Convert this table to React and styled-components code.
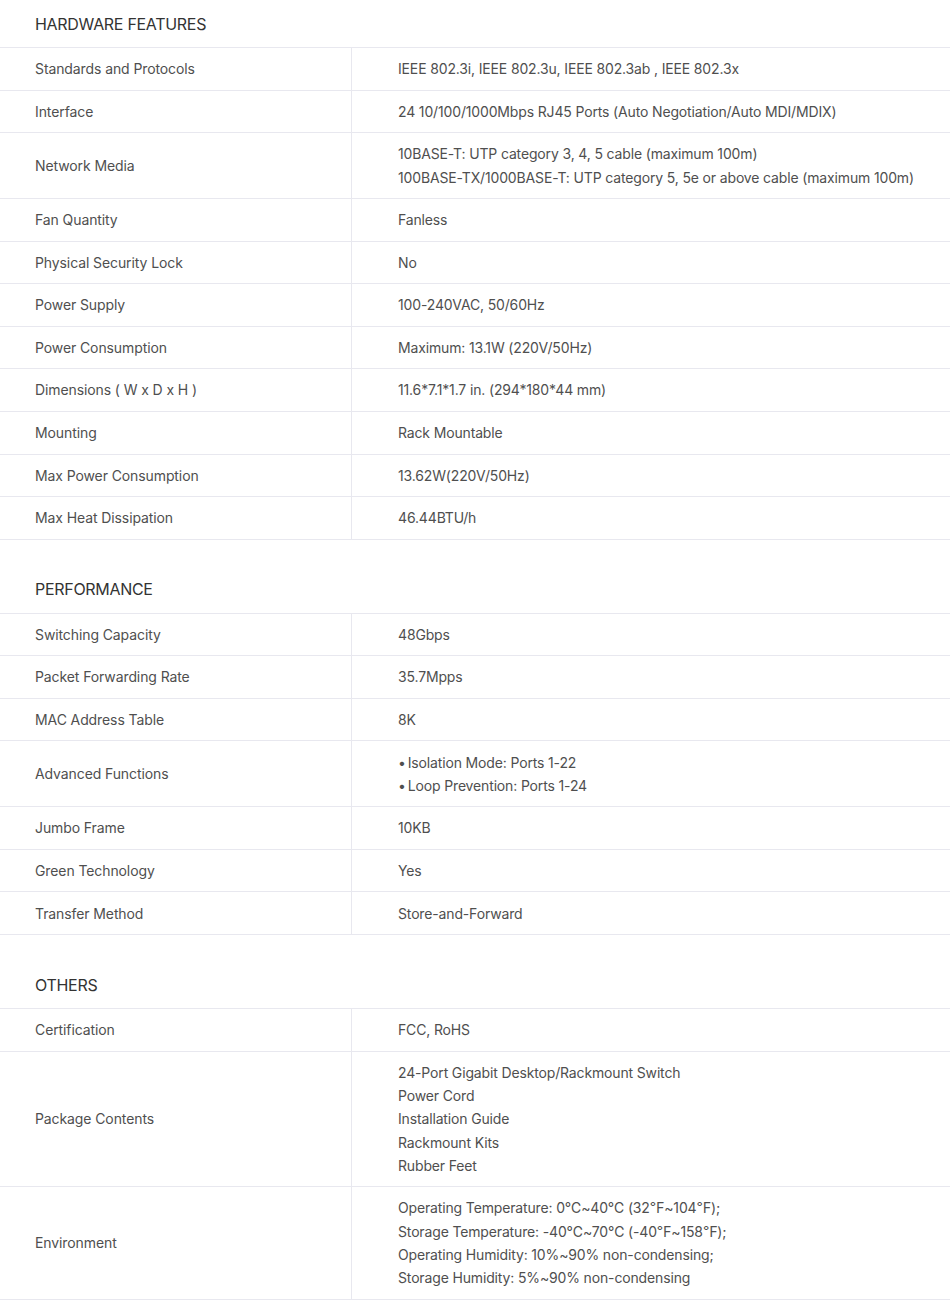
import React from "react";
import styled, { createGlobalStyle } from "styled-components";

const GlobalStyle = createGlobalStyle`
  html, body {
    margin: 0;
    padding: 0;
    background: #fff;
  }
  body {
    font-family: Inter, "Noto Sans", Arial, sans-serif;
    -webkit-font-smoothing: antialiased;
  }
`;

const Page = styled.div`
  width: 950px;
  background: #fff;
`;

const Section = styled.section`
  & + & {
    margin-top: 26px;
  }
`;

const SectionTitle = styled.h2`
  margin: 0;
  height: 47px;
  padding-left: 35px;
  display: flex;
  align-items: center;
  font-size: 16px;
  font-weight: 400;
  color: #333;
  letter-spacing: -0.3px;
`;

const Table = styled.div`
  border-top: 1px solid #e8e8ef;
`;

const Row = styled.div`
  display: grid;
  grid-template-columns: 352px 1fr;
  border-bottom: 1px solid #e8e8ef;
`;

const Label = styled.div`
  display: flex;
  align-items: center;
  padding: 9.15px 0 9.15px 35px;
  border-right: 1px solid #e8e8ef;
  font-size: 14px;
  line-height: 23.3px;
  letter-spacing: -0.1px;
  color: #4f4f4f;
`;

const Value = styled.div`
  padding: 9.15px 20px 9.15px 46px;
  font-size: 14px;
  line-height: 23.3px;
  letter-spacing: -0.15px;
  color: #4f4f4f;
`;

const Line = styled.div`
  white-space: nowrap;
`;

const Bullet = styled.span`
  margin-right: 2px;
`;

const sections = [
  {
    title: "HARDWARE FEATURES",
    rows: [
      ["Standards and Protocols", ["IEEE 802.3i, IEEE 802.3u, IEEE 802.3ab , IEEE 802.3x"]],
      ["Interface", ["24 10/100/1000Mbps RJ45 Ports (Auto Negotiation/Auto MDI/MDIX)"]],
      [
        "Network Media",
        [
          "10BASE-T: UTP category 3, 4, 5 cable (maximum 100m)",
          "100BASE-TX/1000BASE-T: UTP category 5, 5e or above cable (maximum 100m)",
        ],
      ],
      ["Fan Quantity", ["Fanless"]],
      ["Physical Security Lock", ["No"]],
      ["Power Supply", ["100-240VAC, 50/60Hz"]],
      ["Power Consumption", ["Maximum: 13.1W (220V/50Hz)"]],
      ["Dimensions ( W x D x H )", ["11.6*7.1*1.7 in. (294*180*44 mm)"]],
      ["Mounting", ["Rack Mountable"]],
      ["Max Power Consumption", ["13.62W(220V/50Hz)"]],
      ["Max Heat Dissipation", ["46.44BTU/h"]],
    ],
  },
  {
    title: "PERFORMANCE",
    rows: [
      ["Switching Capacity", ["48Gbps"]],
      ["Packet Forwarding Rate", ["35.7Mpps"]],
      ["MAC Address Table", ["8K"]],
      ["Advanced Functions", ["Isolation Mode: Ports 1-22", "Loop Prevention: Ports 1-24"], true],
      ["Jumbo Frame", ["10KB"]],
      ["Green Technology", ["Yes"]],
      ["Transfer Method", ["Store-and-Forward"]],
    ],
  },
  {
    title: "OTHERS",
    rows: [
      ["Certification", ["FCC, RoHS"]],
      [
        "Package Contents",
        [
          "24-Port Gigabit Desktop/Rackmount Switch",
          "Power Cord",
          "Installation Guide",
          "Rackmount Kits",
          "Rubber Feet",
        ],
      ],
      [
        "Environment",
        [
          "Operating Temperature: 0℃~40℃ (32℉~104℉);",
          "Storage Temperature: -40℃~70℃ (-40℉~158℉);",
          "Operating Humidity: 10%~90% non-condensing;",
          "Storage Humidity: 5%~90% non-condensing",
        ],
      ],
    ],
  },
];

export default function App() {
  return (
    <Page>
      <GlobalStyle />
      {sections.map((section) => (
        <Section key={section.title}>
          <SectionTitle>{section.title}</SectionTitle>
          <Table>
            {section.rows.map(([label, lines, bulleted]) => (
              <Row key={label}>
                <Label>{label}</Label>
                <Value>
                  {lines.map((text) => (
                    <Line key={text}>
                      {bulleted && <Bullet>•</Bullet>}
                      {text}
                    </Line>
                  ))}
                </Value>
              </Row>
            ))}
          </Table>
        </Section>
      ))}
    </Page>
  );
}
